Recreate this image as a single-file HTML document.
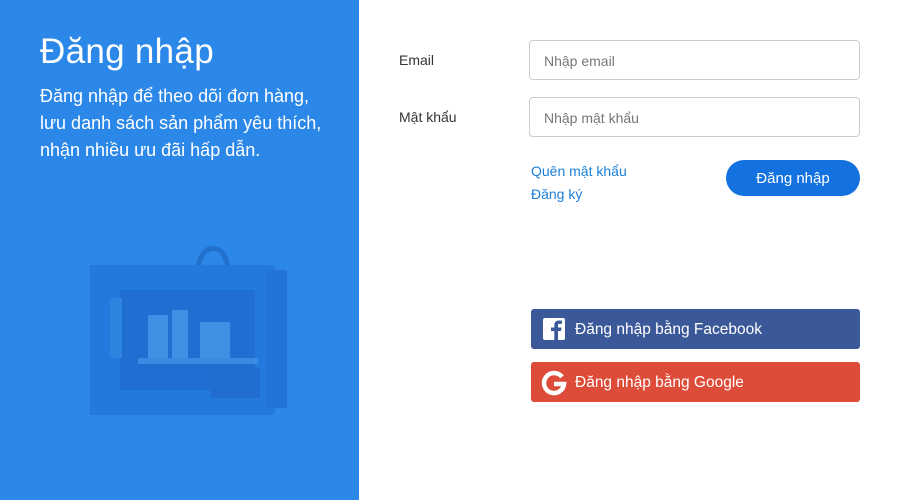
<!DOCTYPE html>
<html><head><meta charset="utf-8">
<style>
*{margin:0;padding:0;box-sizing:border-box}
body{width:900px;height:500px;background:#fff;font-family:"Liberation Sans",sans-serif;position:relative;overflow:hidden}
.left{position:absolute;left:0;top:0;width:359px;height:500px;background:#2B87E8;color:#fff}
.left h1{position:absolute;left:40px;top:32px;font-size:35px;font-weight:normal;letter-spacing:0.3px}
.left p{position:absolute;left:40px;top:83px;font-size:18px;line-height:27px;width:292px}
.lbl{position:absolute;left:399px;font-size:14px;color:#333}
.inp{position:absolute;left:529px;width:331px;height:40px;border:1px solid #ccc;border-radius:4px;font-size:14px;color:#777;padding:12px 14px}
.link{position:absolute;left:531px;font-size:14px;color:#1a7fd8}
.btn{position:absolute;left:726px;top:160px;width:134px;height:36px;background:#1472E0;border-radius:18px;color:#fff;font-size:15px;text-align:center;line-height:38px}
.soc{position:absolute;left:531px;width:329px;height:40px;border-radius:3px;color:#fff;font-size:15.5px;line-height:42px;padding-left:44px}
.fb{top:309px;background:#3B5998}
.gg{top:362px;background:#DD4B39}
</style></head><body>
<div class="left">
<h1>Đăng nhập</h1>
<p>Đăng nhập để theo dõi đơn hàng, lưu danh sách sản phẩm yêu thích, nhận nhiều ưu đãi hấp dẫn.</p>
<svg style="position:absolute;left:80px;top:240px" width="220" height="180" viewBox="0 0 220 180">
<path d="M118 33 C118 0,148 0,148 33" stroke="#2270cc" stroke-width="5" fill="none"/>
<rect x="10" y="25" width="185" height="150" fill="#2479dc"/>
<rect x="185" y="30" width="22" height="138" fill="#2274d6"/>
<rect x="40" y="50" width="135" height="100" fill="#206ed2"/>
<rect x="30" y="58" width="12" height="60" fill="#2e85e0"/>
<rect x="68" y="75" width="20" height="45" fill="#3f8fe4"/>
<rect x="92" y="70" width="16" height="50" fill="#3f8fe4"/>
<rect x="120" y="82" width="30" height="38" fill="#3f8fe4"/>
<rect x="58" y="118" width="120" height="6" fill="#3a8ae2"/>
<rect x="130" y="128" width="50" height="30" fill="#226ed0"/>
</svg>
</div>
<div class="lbl" style="top:52px">Email</div>
<div class="inp" style="top:40px">Nhập email</div>
<div class="lbl" style="top:109px">Mật khẩu</div>
<div class="inp" style="top:97px">Nhập mật khẩu</div>
<div class="link" style="top:163px">Quên mật khẩu</div>
<div class="link" style="top:186px">Đăng ký</div>
<div class="btn">Đăng nhập</div>
<div class="soc fb"><svg style="position:absolute;left:12px;top:9px" width="22" height="22" viewBox="0 0 22 22"><rect width="22" height="22" rx="2" fill="#fff"/><path d="M15 22V13h3l.5-3.5H15V7.5c0-1 .3-1.7 1.8-1.7H19V2.7C18.6 2.6 17.4 2.5 16 2.5c-3 0-4.7 1.8-4.7 5v2H8V13h3.3v9z" fill="#3B5998"/></svg>Đăng nhập bằng Facebook</div>
<div class="soc gg"><svg style="position:absolute;left:10px;top:8px" width="26" height="26" viewBox="0 0 26 26"><path d="M21 7A10 10 0 1 0 23 14H13" stroke="#fff" stroke-width="4.5" fill="none"/></svg>Đăng nhập bằng Google</div>
</body></html>
